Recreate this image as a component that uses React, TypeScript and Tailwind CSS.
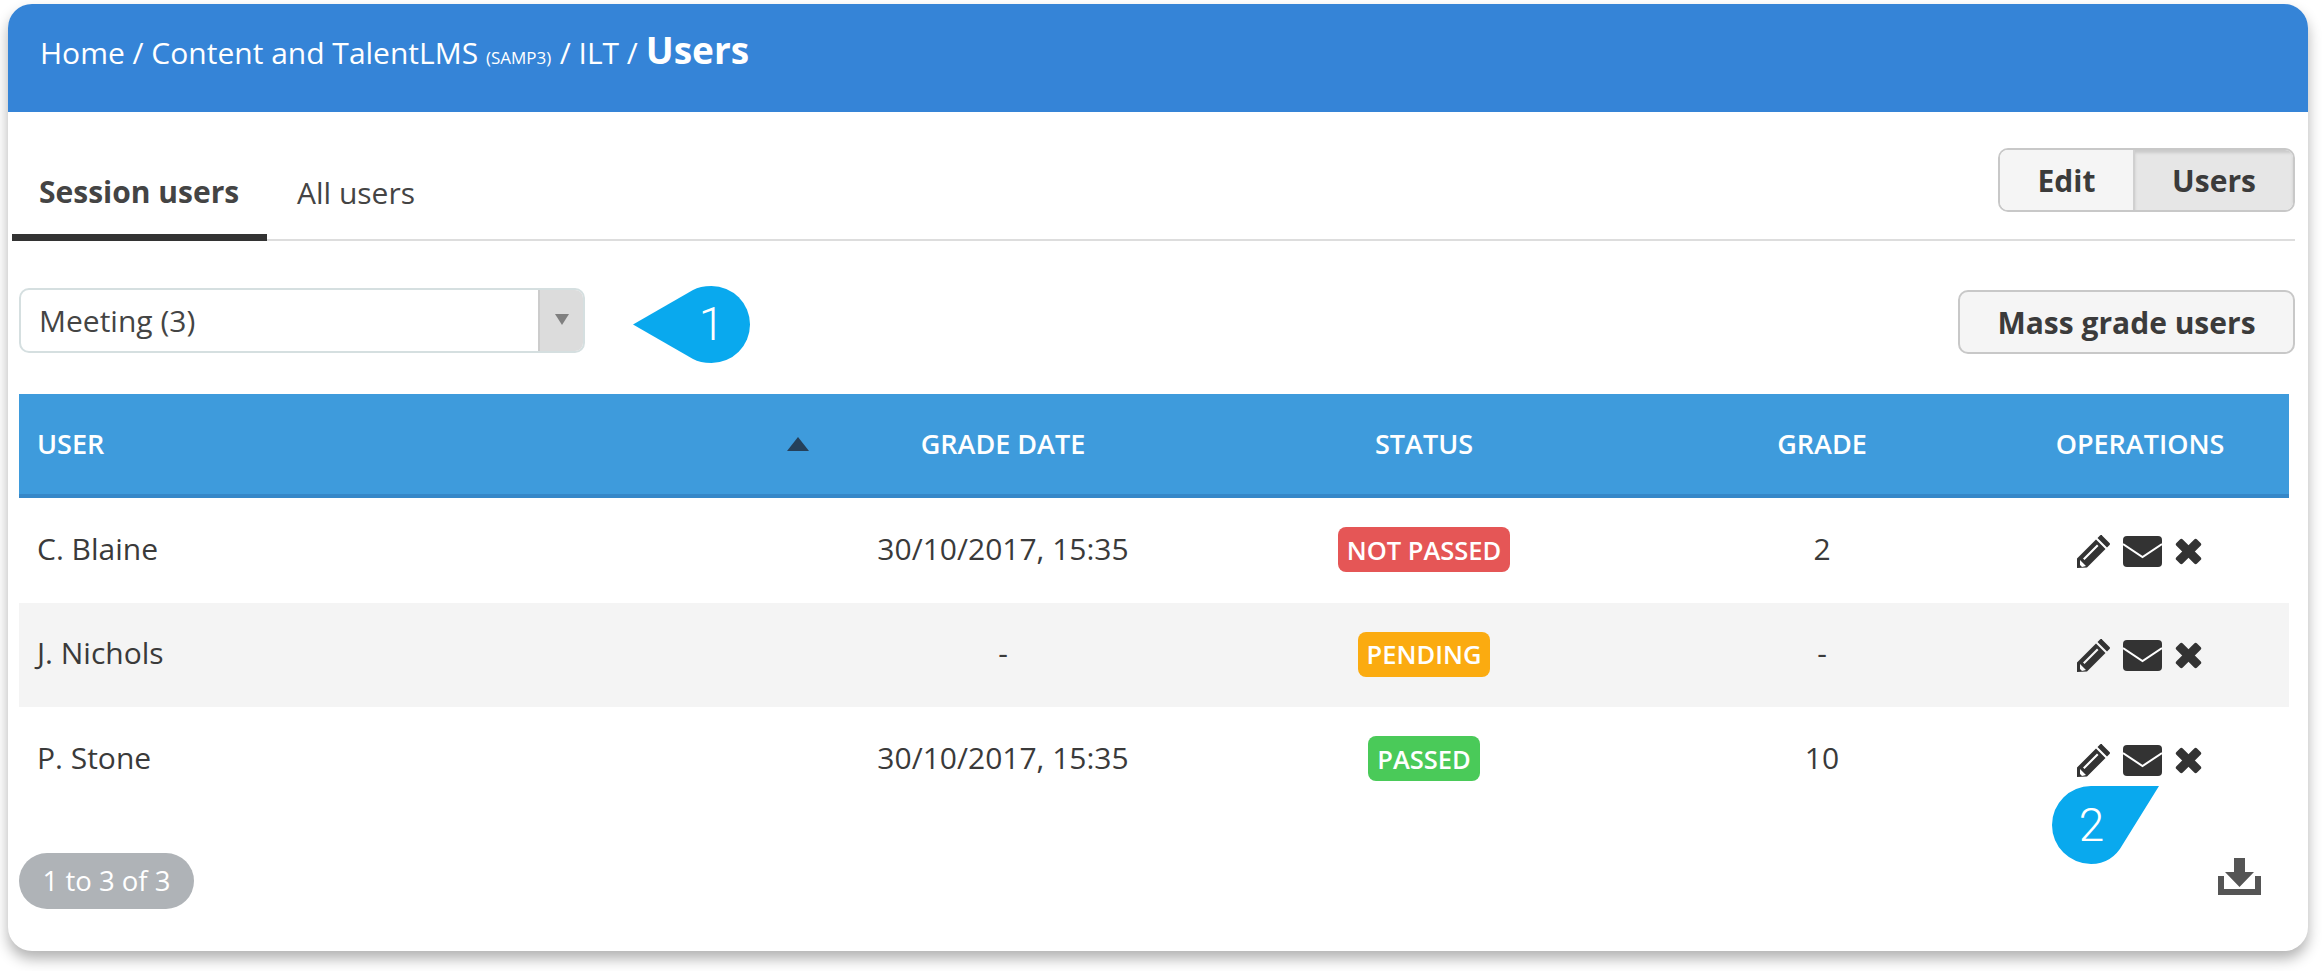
import React from "react";

const rows = [
  { user: "C. Blaine", date: "30/10/2017, 15:35", status: "NOT PASSED", color: "bg-[#e55656]", grade: "2" },
  { user: "J. Nichols", date: "-", status: "PENDING", color: "bg-[#fbab10]", grade: "-" },
  { user: "P. Stone", date: "30/10/2017, 15:35", status: "PASSED", color: "bg-[#4aca59]", grade: "10" },
];

const Pencil = () => (
  <svg viewBox="0 0 33 33" className="w-[33px] h-[33px]" fill="#333">
    <path d="M25 0.5l7.5 7.5q1 1 0 2l-2.5 2.5-9.5-9.5 2.5-2.5q1-1 2-0.5z" />
    <path fillRule="evenodd" d="M19 4.5l9.5 9.5-18.5 18.5-10 0.5v-9.5zM20 9.5l-14 14 1.5 1.5 14-14zM3 25v5l2 2 4-1z" />
  </svg>
);

const Envelope = () => (
  <svg viewBox="0 0 39 31" className="w-[39px] h-[31px]">
    <rect width="39" height="31" rx="4" fill="#333" />
    <path d="M0 8l19.5 13L39 8" fill="none" stroke="#fff" strokeWidth="2" />
  </svg>
);

const Cross = () => (
  <svg viewBox="0 0 27 27" className="w-[27px] h-[27px]" fill="#333">
    <rect x="-1.1" y="9" width="29.2" height="9" rx="2" transform="rotate(45 13.5 13.5)" />
    <rect x="-1.1" y="9" width="29.2" height="9" rx="2" transform="rotate(-45 13.5 13.5)" />
  </svg>
);

const Download = () => (
  <svg viewBox="0 0 43 37" className="w-[43px] h-[37px]" fill="#555">
    <path d="M16 0h11v14h9L21.5 29 7 14h9z" />
    <path d="M0 18h6v13h31V18h6v19H0z" />
  </svg>
);

export default function App() {
  return (
    <div className="w-[2324px] h-[971px] pt-[4px] pl-[8px] bg-white overflow-hidden relative text-[#333]" style={{ fontFamily: '"Open Sans", sans-serif' }}>
      <div className="w-[2300px] h-[947px] rounded-[24px] bg-white shadow-[0_8px_14px_rgba(0,0,0,0.3)] overflow-hidden">
        <div className="h-[108px] bg-[#3584d7] pl-[32px] pt-[23px] text-white text-[30px] leading-[46px] flex items-baseline">
          <span className="whitespace-pre">Home / Content and TalentLMS </span>
          <span className="text-[17px] whitespace-pre">(SAMP3) </span>
          <span className="whitespace-pre ml-[4px]">/ ILT / </span>
          <span className="font-bold text-[37px]">Users</span>
        </div>

        <div className="h-[129px] ml-[4px] mr-[13px] border-b-2 border-[#ddd] flex justify-between">
          <div className="flex text-[30px]">
            <div className="w-[255px] h-[129px] pl-[27px] pt-[57px] font-bold text-[#444] border-b-[7px] border-[#333]">Session users</div>
            <div className="pl-[30px] pt-[58px] text-[#444]">All users</div>
          </div>
          <div className="flex mt-[36px] h-[64px] w-[297px] rounded-[10px] border-2 border-[#c8c8c8] text-[30px] font-bold text-[#3b3b3b] overflow-hidden">
            <div className="w-[133px] bg-[#f5f5f5] flex items-center justify-center">Edit</div>
            <div className="flex-1 bg-[#e6e6e6] border-l-2 border-[#d0d0d0] shadow-[inset_0_3px_3px_rgba(0,0,0,0.12)] flex items-center justify-center">Users</div>
          </div>
        </div>

        <div className="flex justify-between items-start mt-[47px] ml-[11px] mr-[13px]">
          <div className="w-[566px] h-[65px] rounded-[10px] border-2 border-[#d5dfe0] flex overflow-hidden">
            <div className="flex-1 pl-[18px] text-[30px] text-[#444] flex items-center border-r-2 border-[#ccc]">Meeting (3)</div>
            <div className="w-[43px] bg-[#dcdcdc] flex items-center justify-center pb-[2px]">
              <div className="w-0 h-0 border-l-[7px] border-r-[7px] border-t-[11px] border-l-transparent border-r-transparent border-t-[#808080]" />
            </div>
          </div>
          <div className="w-[337px] h-[64px] mt-[2px] rounded-[10px] border-2 border-[#c8c8c8] bg-[#f5f5f5] flex items-center justify-center text-[30px] font-bold text-[#3b3b3b]">
            Mass grade users
          </div>
        </div>

        <div className="ml-[11px] w-[2270px] mt-[40px]">
          <div className="grid grid-cols-[796px_376px_466px_330px_302px] h-[104px] bg-[#3e9bdc] border-b-4 border-[#3587c8] items-center text-white text-[27px] font-semibold text-center">
            <div className="pl-[18px] pr-[6px] flex items-center justify-between">
              <span>USER</span>
              <div className="w-0 h-0 border-l-[11px] border-r-[11px] border-b-[14px] border-l-transparent border-r-transparent border-b-[#25405a]" />
            </div>
            <div>GRADE DATE</div>
            <div>STATUS</div>
            <div>GRADE</div>
            <div className="pl-[4px]">OPERATIONS</div>
          </div>
          {rows.map((r, i) => (
            <div key={r.user} className={`grid grid-cols-[796px_376px_466px_330px_302px] h-[104.5px] items-center text-center text-[30px] text-[#3a3a3a] ${i === 1 ? "bg-[#f4f4f4]" : ""}`}>
              <div className="pl-[18px] pb-[4px] text-left">{r.user}</div>
              <div className="pb-[4px]">{r.date}</div>
              <div className="flex justify-center pb-[1px]">
                <span className={`${r.color} h-[45px] px-[9px] rounded-[8px] flex items-center text-white text-[25.5px] font-semibold`}>{r.status}</span>
              </div>
              <div className="pb-[4px]">{r.grade}</div>
              <div className="flex justify-center items-center gap-[13px] pt-[2px] pl-[2px]">
                <Pencil />
                <Envelope />
                <Cross />
              </div>
            </div>
          ))}
        </div>

        <div className="flex justify-between ml-[11px] mr-[47px] mt-[41.5px]">
          <div className="w-[175px] h-[56px] rounded-full bg-[#afb3b7] text-white text-[27.5px] flex items-center justify-center">1 to 3 of 3</div>
          <div className="mt-[5px]">
            <Download />
          </div>
        </div>
      </div>

      {/* callouts */}
      <div className="absolute left-[633px] top-[286px] w-[117px] h-[77px] flex items-center justify-center">
        <svg viewBox="0 0 117 77" className="absolute inset-0 w-[117px] h-[77px]" fill="#09a9ee">
          <path d="M0 38.5L60 4Q67 0 78.5 0a38.5 38.5 0 0 1 0 77Q67 77 60 73z" />
        </svg>
        <span className="relative ml-[40px] text-white text-[46px] font-light" style={{ fontFamily: "Roboto, sans-serif" }}>1</span>
      </div>
      <div className="absolute left-[2052px] top-[786px] w-[107px] h-[78px] flex items-center justify-center">
        <svg viewBox="0 0 107 78" className="absolute inset-0 w-[107px] h-[78px]" fill="#09a9ee">
          <path d="M107 0L71 58Q60 78 39 78a39 39 0 0 1 0-78z" />
        </svg>
        <span className="relative mr-[28px] w-[39px] text-center text-white text-[46px] font-light" style={{ fontFamily: "Roboto, sans-serif" }}>2</span>
      </div>
    </div>
  );
}
